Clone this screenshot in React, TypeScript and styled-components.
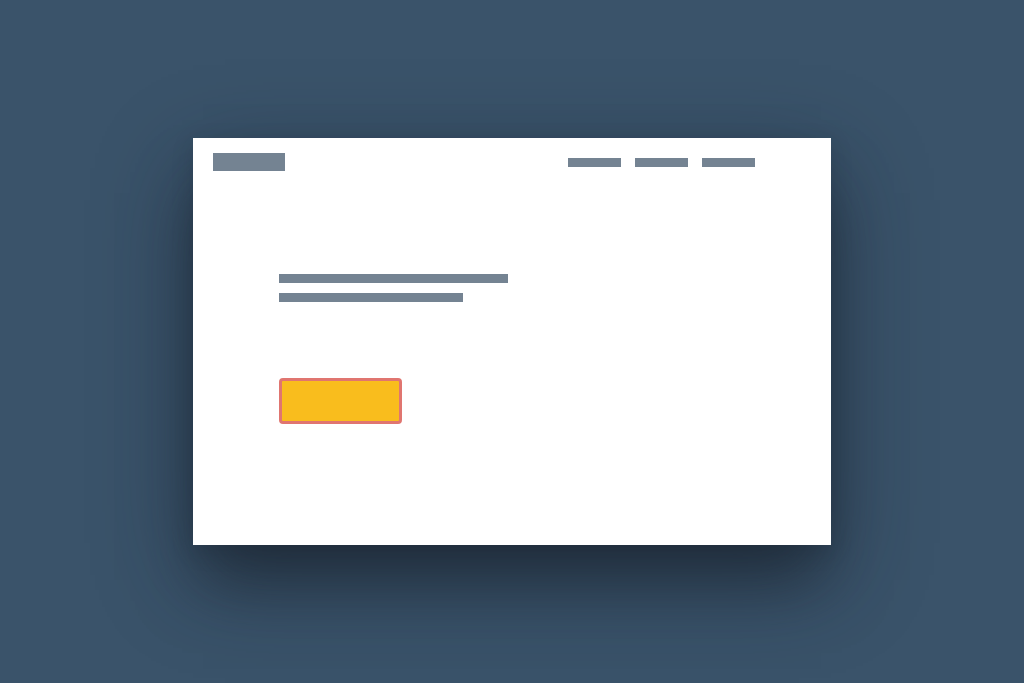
import React from 'react';
import styled, { createGlobalStyle } from 'styled-components';

const GlobalStyle = createGlobalStyle`
  html, body {
    margin: 0;
    padding: 0;
    height: 100%;
    background: #3a536a;
    font-family: "Liberation Sans", Arial, sans-serif;
  }
  #root {
    height: 100%;
  }
`;

const Stage = styled.div`
  width: 100%;
  height: 100%;
  display: flex;
  align-items: center;
  justify-content: center;
  background: #3a536a;
`;

const Card = styled.div`
  width: 638px;
  height: 407px;
  background: #ffffff;
  box-shadow:
    0 45px 60px -10px rgba(24, 32, 44, 0.55),
    0 30px 90px rgba(24, 34, 46, 0.45),
    0 6px 20px rgba(24, 34, 46, 0.2);
  display: flex;
  flex-direction: column;
`;

const Header = styled.div`
  display: flex;
  align-items: center;
  justify-content: space-between;
  padding: 15px 76px 0 20px;
`;

const Logo = styled.div`
  width: 72px;
  height: 18px;
  background: #748392;
`;

const Nav = styled.nav`
  display: flex;
  gap: 14px;
`;

const NavItem = styled.div`
  width: 53px;
  height: 9px;
  background: #748392;
`;

const Hero = styled.div`
  display: flex;
  flex-direction: column;
  align-items: flex-start;
  padding: 103px 0 0 86px;
`;

const Line = styled.div<{ $width: number }>`
  width: ${(p) => p.$width}px;
  height: 9px;
  background: #748392;
  margin-bottom: 10px;
`;

const Button = styled.button`
  margin-top: 66px;
  width: 123px;
  height: 46px;
  padding: 0;
  background: #f9bd1d;
  border: 3px solid #e07570;
  border-radius: 4px;
  cursor: pointer;
`;

export default function App() {
  return (
    <>
      <GlobalStyle />
      <Stage>
        <Card>
          <Header>
            <Logo />
            <Nav>
              <NavItem />
              <NavItem />
              <NavItem />
            </Nav>
          </Header>
          <Hero>
            <Line $width={229} />
            <Line $width={184} />
            <Button aria-label="Call to action" />
          </Hero>
        </Card>
      </Stage>
    </>
  );
}
